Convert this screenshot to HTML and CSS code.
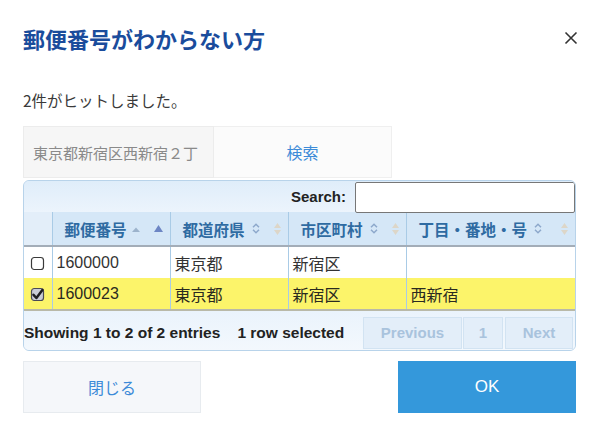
FILE: index.html
```html
<!DOCTYPE html>
<html lang="ja">
<head>
<meta charset="utf-8">
<link rel="stylesheet" href="styles.css">
</head>
<body>
<div class="dialog">
  <div class="header">
    <h1 class="title">郵便番号がわからない方</h1>
    <span class="close">
      <svg width="14" height="14" viewBox="0 0 14 14"><path d="M1.5 1.5 L12.5 12.5 M12.5 1.5 L1.5 12.5" stroke="#333" stroke-width="1.6" fill="none"/></svg>
    </span>
  </div>
  <p class="message">2件がヒットしました。</p>
  <div class="search-row">
    <div class="addr-input">東京都新宿区西新宿２丁</div>
    <div class="search-btn">検索</div>
  </div>
  <div class="dt">
    <div class="dt-toolbar">
      <span class="dt-label">Search:</span>
      <span class="dt-search"></span>
    </div>
    <table class="grid">
      <colgroup><col class="c0"><col class="c1"><col class="c2"><col class="c3"><col></colgroup>
      <thead>
        <tr>
          <th class="chk"></th>
          <th><div class="th-in"><span>郵便番号</span>
            <svg class="s-small" width="8" height="5" viewBox="0 0 8 5"><path d="M0 5 L4 0.5 L8 5Z" fill="#9cb3cc"/></svg>
            <svg class="s-right" width="9" height="7" viewBox="0 0 9 7"><path d="M0 7 L4.5 0 L9 7Z" fill="#6d86c4"/></svg>
          </div></th>
          <th><div class="th-in"><span>都道府県</span>
            <svg class="s-both" width="8" height="11" viewBox="0 0 8 11"><path d="M1 4.2 L4 1.2 L7 4.2 M1 6.8 L4 9.8 L7 6.8" stroke="#8ea9cc" stroke-width="1.5" fill="none"/></svg>
            <svg class="s-right" width="7" height="12" viewBox="0 0 7 12"><path d="M0 5 L3.5 0 L7 5Z M0 7 L3.5 12 L7 7Z" fill="#ddd6c8"/></svg>
          </div></th>
          <th><div class="th-in"><span>市区町村</span>
            <svg class="s-both" width="8" height="11" viewBox="0 0 8 11"><path d="M1 4.2 L4 1.2 L7 4.2 M1 6.8 L4 9.8 L7 6.8" stroke="#8ea9cc" stroke-width="1.5" fill="none"/></svg>
            <svg class="s-right" width="7" height="12" viewBox="0 0 7 12"><path d="M0 5 L3.5 0 L7 5Z M0 7 L3.5 12 L7 7Z" fill="#ddd6c8"/></svg>
          </div></th>
          <th><div class="th-in"><span>丁目・番地・号</span>
            <svg class="s-both" width="8" height="11" viewBox="0 0 8 11"><path d="M1 4.2 L4 1.2 L7 4.2 M1 6.8 L4 9.8 L7 6.8" stroke="#8ea9cc" stroke-width="1.5" fill="none"/></svg>
            <svg class="s-right" width="7" height="12" viewBox="0 0 7 12"><path d="M0 5 L3.5 0 L7 5Z M0 7 L3.5 12 L7 7Z" fill="#ddd6c8"/></svg>
          </div></th>
        </tr>
      </thead>
      <tbody>
        <tr>
          <td class="chk"><svg width="15" height="15" viewBox="0 0 15 15"><rect x="1.5" y="1.5" width="12" height="12" rx="2.8" fill="#fff" stroke="#3a3a3a" stroke-width="1.2"/></svg></td>
          <td>1600000</td><td>東京都</td><td>新宿区</td><td></td>
        </tr>
        <tr class="selected">
          <td class="chk"><svg width="15" height="15" viewBox="0 0 15 15"><rect x="1.5" y="1.5" width="12" height="12" rx="2.8" fill="#c9ccd6" stroke="#4a4a55" stroke-width="1.2"/><path d="M3.5 7.8 L6.4 11 L12.4 3" stroke="#1e1e22" stroke-width="2.5" fill="none" stroke-linecap="round" stroke-linejoin="round"/></svg></td>
          <td>1600023</td><td>東京都</td><td>新宿区</td><td>西新宿</td>
        </tr>
      </tbody>
    </table>
    <div class="dt-footer">
      <span class="info">Showing 1 to 2 of 2 entries</span>
      <span class="sel">1 row selected</span>
      <div class="pager">
        <span class="pg prev">Previous</span>
        <span class="pg num">1</span>
        <span class="pg next">Next</span>
      </div>
    </div>
  </div>
  <div class="actions">
    <div class="btn-close">閉じる</div>
    <div class="btn-ok">OK</div>
  </div>
</div>
</body>
</html>
```

FILE: styles.css
```css
* { box-sizing: border-box; }
html, body { margin: 0; padding: 0; background: #fff; }
body {
  font-family: "Liberation Sans", "Noto Sans CJK JP", sans-serif;
  color: #333;
  width: 604px;
  height: 440px;
  overflow: hidden;
}
.dialog { padding: 0 28px 0 23px; }

.header {
  display: flex;
  align-items: center;
  justify-content: space-between;
  padding-top: 26px;
}
.title {
  margin: 0;
  font-size: 22px;
  line-height: 24px;
  font-weight: bold;
  color: #1a4c9c;
  font-family: "Noto Sans CJK JP", sans-serif;
}
.close { display: flex; margin-right: -2px; }

.message {
  margin: 40px 0 0 0;
  font-size: 15.5px;
  line-height: 20px;
  color: #3a3a3a;
  font-family: "Noto Sans CJK JP", sans-serif;
}

.search-row {
  display: flex;
  margin-top: 16px;
  height: 52px;
  width: 369px;
}
.addr-input {
  width: 191px;
  display: flex;
  align-items: center;
  padding-left: 9px;
  font-size: 15px;
  color: #8a8a8a;
  background: #f6f6f6;
  border: 1px solid #ececec;
  font-family: "Noto Sans CJK JP", sans-serif;
  white-space: nowrap;
  overflow: hidden;
}
.search-btn {
  flex: 1;
  display: flex;
  align-items: center;
  justify-content: center;
  font-size: 16px;
  color: #3d8bd8;
  background: #fbfbfb;
  border: 1px solid #efefef;
  border-left: none;
  font-family: "Noto Sans CJK JP", sans-serif;
}

.dt {
  margin-top: 2px;
  border: 1px solid #b8d3ea;
  border-radius: 6px;
  overflow: hidden;
  background: linear-gradient(#dcebf9, #f1f7fd);
}
.dt-toolbar {
  display: flex;
  justify-content: flex-end;
  align-items: center;
  height: 31px;
  background: linear-gradient(#dfedfa, #ecf4fc);
}
.dt-label {
  font-weight: bold;
  font-size: 15px;
  color: #222;
  margin-right: 9px;
}
.dt-search {
  width: 220px;
  height: 31px;
  margin-top: 1px;
  background: #fff;
  border: 1px solid #777;
  border-radius: 2px;
}

.grid {
  width: 100%;
  border-collapse: collapse;
  table-layout: fixed;
  font-family: "Liberation Sans", "Noto Sans CJK JP", sans-serif;
  font-size: 16px;
}
.c0 { width: 28px; }
.c1, .c2, .c3 { width: 118px; }
.grid th {
  height: 34px;
  background: #d5e7f7;
  color: #2f6ba2;
  font-weight: bold;
  text-align: left;
  padding: 0 6px 0 12px;
  border-left: 1px solid #a9cbe6;
  border-bottom: 2px solid #a3adb8;
  font-family: "Noto Sans CJK JP", sans-serif;
  font-size: 15.5px;
}
.grid th.chk {
  border-left: none;
  background: #e3eef9;
  padding: 0;
}
.th-in {
  display: flex;
  align-items: center;
}
.s-small { margin-left: 5px; margin-top: 2px; }
.s-both { margin-left: 7px; }
.s-right { margin-left: auto; margin-right: 1px; }

.grid td {
  height: 32px;
  padding: 0 0 0 4px;
  border-left: 1px solid #a9cbe6;
  background: #fff;
  color: #333;
  font-family: "Liberation Sans", "Noto Sans CJK JP", sans-serif;
  white-space: nowrap;
}
.grid td.chk {
  border-left: none;
  padding: 0 0 0 6px;
}
.grid td.chk svg { display: block; margin-top: 2px; }
.grid tr.selected td {
  background: #fcf46a;
  color: #2a2a20;
  border-bottom: 2px solid #b9b9a8;
}

.dt-footer {
  display: flex;
  align-items: center;
  height: 39px;
  padding: 5px 2px 1px 0;
  background: linear-gradient(#eaf3fc, #f3f8fd);
}
.info, .sel {
  font-weight: bold;
  font-size: 15.5px;
  color: #222;
}
.sel { margin-left: 17px; }
.pager {
  display: flex;
  margin-left: auto;
  height: 32px;
}
.pg {
  display: flex;
  align-items: center;
  justify-content: center;
  font-weight: bold;
  font-size: 15px;
  color: #a9c3dd;
  background: #e3eef9;
  border: 1px solid #d2e3f2;
  margin-left: 1px;
}
.prev { width: 99px; }
.num { width: 40px; }
.next { width: 68px; margin-left: 2px; }

.actions {
  display: flex;
  justify-content: space-between;
  margin-top: 10px;
}
.btn-close, .btn-ok {
  width: 178px;
  height: 52px;
  display: flex;
  align-items: center;
  justify-content: center;
  font-size: 16px;
  font-family: "Noto Sans CJK JP", sans-serif;
}
.btn-close {
  background: #f5f7fa;
  border: 1px solid #e7ebef;
  color: #3d8bd8;
}
.btn-ok {
  background: #3498db;
  color: #fff;
  font-family: "Liberation Sans", sans-serif;
  font-size: 17px;
}
```
